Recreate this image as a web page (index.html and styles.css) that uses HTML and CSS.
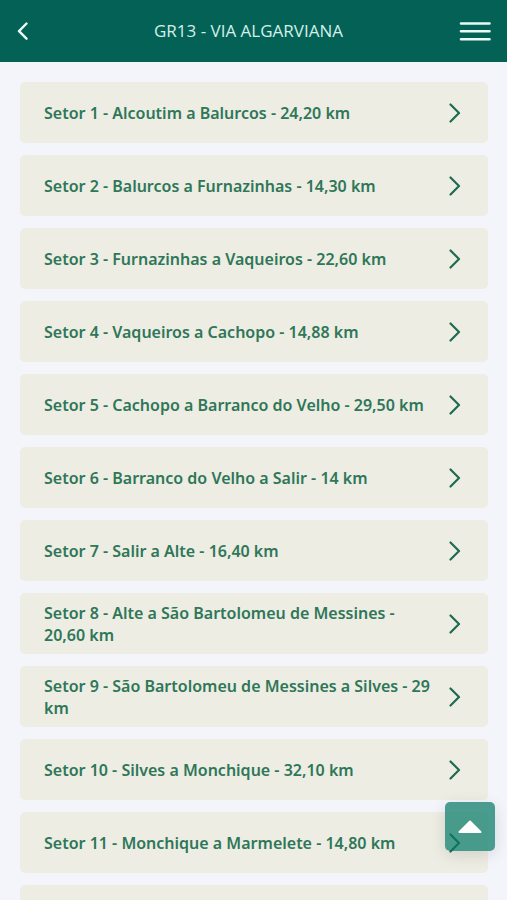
FILE: index.html
```html
<!DOCTYPE html>
<html lang="pt">
<head>
<meta charset="utf-8">
<meta name="viewport" content="width=device-width, initial-scale=1">
<title>GR13 - VIA ALGARVIANA</title>
<link rel="stylesheet" href="styles.css">
</head>
<body>
<svg class="defs" aria-hidden="true">
  <symbol id="chevron" viewBox="0 0 12 20"><path d="M1.500 1.500 10 10l-8.500 8.500"/></symbol>
</svg>
<header class="bar">
  <button class="icon-button" type="button" aria-label="Voltar">
    <svg class="back" viewBox="0 0 12 18"><path d="M10.500 1.500 3 9.200l7.500 7.500"/></svg>
  </button>
  <h1 class="title">GR13 - VIA ALGARVIANA</h1>
  <button class="icon-button" type="button" aria-label="Menu">
    <svg class="menu" viewBox="0 0 32 20"><path d="M2 2.500h28.500M2 10.300h28.500M2 18.200h28.500"/></svg>
  </button>
</header>
<main class="content">
  <ul class="sectors">
    <li><a class="card" href="#"><span class="name">Setor 1 - Alcoutim a Balurcos - 24,20 km</span><svg class="chevron"><use href="#chevron"/></svg></a></li>
    <li><a class="card" href="#"><span class="name">Setor 2 - Balurcos a Furnazinhas - 14,30 km</span><svg class="chevron"><use href="#chevron"/></svg></a></li>
    <li><a class="card" href="#"><span class="name">Setor 3 - Furnazinhas a Vaqueiros - 22,60 km</span><svg class="chevron"><use href="#chevron"/></svg></a></li>
    <li><a class="card" href="#"><span class="name">Setor 4 - Vaqueiros a Cachopo - 14,88 km</span><svg class="chevron"><use href="#chevron"/></svg></a></li>
    <li><a class="card" href="#"><span class="name">Setor 5 - Cachopo a Barranco do Velho - 29,50 km</span><svg class="chevron"><use href="#chevron"/></svg></a></li>
    <li><a class="card" href="#"><span class="name">Setor 6 - Barranco do Velho a Salir - 14 km</span><svg class="chevron"><use href="#chevron"/></svg></a></li>
    <li><a class="card" href="#"><span class="name">Setor 7 - Salir a Alte - 16,40 km</span><svg class="chevron"><use href="#chevron"/></svg></a></li>
    <li><a class="card" href="#"><span class="name">Setor 8 - Alte a São Bartolomeu de Messines - 20,60 km</span><svg class="chevron"><use href="#chevron"/></svg></a></li>
    <li><a class="card" href="#"><span class="name">Setor 9 - São Bartolomeu de Messines a Silves - 29 km</span><svg class="chevron"><use href="#chevron"/></svg></a></li>
    <li><a class="card" href="#"><span class="name">Setor 10 - Silves a Monchique - 32,10 km</span><svg class="chevron"><use href="#chevron"/></svg></a></li>
    <li><a class="card" href="#"><span class="name">Setor 11 - Monchique a Marmelete - 14,80 km</span><svg class="chevron"><use href="#chevron"/></svg></a></li>
    <li><div class="card"></div></li>
  </ul>
</main>
<button class="to-top" type="button" aria-label="Voltar ao topo">
  <svg class="caret" viewBox="0 0 24 14"><path d="M12 1.500 22.500 12H1.500z"/></svg>
</button>
</body>
</html>
```
FILE: styles.css
```css
* {
  box-sizing: border-box;
}

body {
  margin: 0;
  height: 100vh;
  display: flex;
  flex-direction: column;
  background: #f4f5fa;
  color: #2f7758;
  font-family: "Noto Sans", sans-serif;
}

.defs {
  display: none;
}

svg {
  display: block;
  fill: none;
  stroke: currentColor;
  stroke-linecap: round;
  stroke-linejoin: round;
}

button {
  border: 0;
  padding: 0;
  cursor: pointer;
}

.bar {
  flex: none;
  height: 62px;
  padding: 0 16px;
  display: grid;
  grid-template-columns: 22px 1fr 32px;
  align-items: center;
  background: #046156;
  color: #fff;
}

.icon-button {
  height: 32px;
  display: flex;
  align-items: center;
  background: none;
  color: #e6fbf5;
}

.back {
  width: 12px;
  height: 18px;
  stroke-width: 2.4;
}

.menu {
  width: 32px;
  height: 20px;
  stroke-width: 2.6;
}

.title {
  margin: 0;
  text-align: center;
  color: #d3f0e9;
  font-family: "Open Sans", sans-serif;
  font-size: 17px;
  line-height: 24px;
  font-weight: 400;
}

.content {
  flex: 1;
  min-height: 0;
  padding: 20px 19px 20px 20px;
  overflow-y: auto;
  scrollbar-width: none;
}

.sectors {
  margin: 0;
  padding: 0;
  list-style: none;
  display: grid;
  gap: 12px;
}

.card {
  min-height: 61px;
  padding: 8px 27px 8px 24px;
  display: flex;
  align-items: center;
  justify-content: space-between;
  gap: 14px;
  border-radius: 5px;
  background: #edede4;
  color: inherit;
  text-decoration: none;
}

.name {
  font-size: 16px;
  line-height: 22px;
  font-weight: 600;
}

.chevron {
  flex: none;
  width: 12px;
  height: 20px;
  color: #1f6b52;
  stroke-width: 2.2;
}

.to-top {
  position: fixed;
  right: 12px;
  bottom: 49px;
  width: 50px;
  height: 49px;
  display: grid;
  place-items: center;
  border-radius: 5px;
  background: rgba(4, 120, 101, 0.71);
  box-shadow: 0 4px 16px rgba(0, 0, 0, 0.12);
  color: #fff;
}

.caret {
  width: 24px;
  height: 14px;
  fill: currentColor;
  stroke-width: 2;
}
```
